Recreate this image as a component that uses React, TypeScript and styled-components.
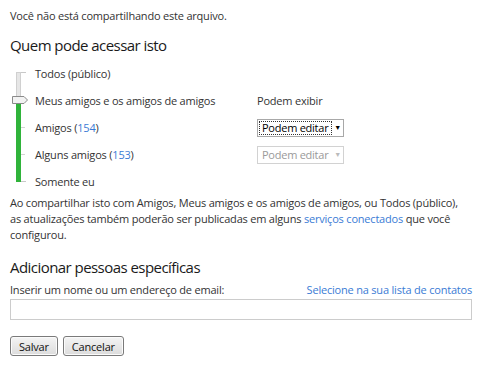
import React from 'react';
import styled, { createGlobalStyle } from 'styled-components';

const GlobalStyle = createGlobalStyle`
  body {
    margin: 0;
    background: #ffffff;
    font-family: "Open Sans", "Liberation Sans", sans-serif;
    color: #333333;
  }
`;

const Wrapper = styled.div`
  width: 480px;
  height: 367px;
  padding: 8px 8px 0 10px;
  box-sizing: border-box;
  font-size: 11px;
  letter-spacing: -0.2px;
`;

const Notice = styled.p`
  margin: 0;
  line-height: 16px;
`;

const SectionTitle = styled.h2<{ $gap: number }>`
  margin: ${(p) => p.$gap}px 0 0;
  font-size: 15px;
  font-weight: 400;
  letter-spacing: -0.55px;
  color: #1a1a1a;
  line-height: 22px;
`;

const AccessGrid = styled.div`
  display: grid;
  grid-template-columns: 25px 222px auto;
  grid-auto-rows: 27px;
  margin-top: 4px;
`;

const SliderCell = styled.div`
  grid-column: 1;
  grid-row: 1 / span 5;
`;

const OptionLabel = styled.div`
  grid-column: 2;
  display: flex;
  align-items: center;
`;

const PermissionCell = styled.div`
  grid-column: 3;
  display: flex;
  align-items: center;
`;

const Count = styled.span`
  color: #3a7bd5;
`;

const Select = styled.div<{ $disabled?: boolean }>`
  width: 87px;
  height: 18px;
  box-sizing: border-box;
  display: flex;
  align-items: stretch;
  border: 1px solid ${(p) => (p.$disabled ? '#d2d2d2' : '#a8a8a8')};
  color: ${(p) => (p.$disabled ? '#9a9a9a' : '#000000')};
  font-size: 11px;
  letter-spacing: -0.25px;
  background: #ffffff;
`;

const SelectValue = styled.div<{ $focused?: boolean }>`
  flex: 1;
  display: flex;
  align-items: center;
  padding-left: 2px;
  margin: 1px 0 1px 1px;
  border: 1px dotted ${(p) => (p.$focused ? '#333333' : 'transparent')};
  white-space: nowrap;
  overflow: hidden;
`;

const SelectArrow = styled.div<{ $disabled?: boolean }>`
  width: 11px;
  display: flex;
  align-items: center;
  justify-content: center;
  color: ${(p) => (p.$disabled ? '#bbbbbb' : '#000000')};
  font-size: 7px;
`;

const Info = styled.p`
  margin: 0;
  width: 470px;
  line-height: 16px;
`;

const Link = styled.a`
  color: #3a7bd5;
  text-decoration: none;
`;

const LabelRow = styled.div`
  display: flex;
  justify-content: space-between;
  margin-top: 4px;
  line-height: 16px;
`;

const EmailInput = styled.input`
  display: block;
  width: 462px;
  height: 21px;
  box-sizing: border-box;
  margin-top: 1px;
  border: 1px solid #cccccc;
  outline: none;
`;

const ButtonRow = styled.div`
  display: flex;
  gap: 5px;
  margin-top: 16px;
`;

const Button = styled.button`
  height: 20px;
  padding: 0 8px;
  border: 1px solid #7a7a7a;
  border-radius: 3px;
  background: linear-gradient(#f4f4f4, #dcdcdc);
  font-family: inherit;
  font-size: 11px;
  letter-spacing: -0.2px;
  color: #111111;
  box-shadow: inset 0 0 0 1px #fbfbfb;
`;

function SliderGraphic() {
  return (
    <svg width="25" height="135" viewBox="0 0 25 135">
      <rect x="6.5" y="12.5" width="4" height="25" fill="#e6e6e6" stroke="#d0d0d0" strokeWidth="1" />
      <line x1="11" y1="12.5" x2="16" y2="12.5" stroke="#c8c8c8" />
      <line x1="11" y1="67.5" x2="15" y2="67.5" stroke="#d4d4d4" />
      <line x1="11" y1="94.5" x2="15" y2="94.5" stroke="#d4d4d4" />
      <rect x="6" y="42" width="5" height="80" fill="#2fb33a" />
      <line x1="11" y1="121.5" x2="16" y2="121.5" stroke="#c8c8c8" />
      <path
        d="M2.5 36.5 H14 L17.5 40 L14 43.5 H2.5 Z"
        fill="#f2f2f2"
        stroke="#8a8a8a"
        strokeWidth="1"
      />
    </svg>
  );
}

function App() {
  return (
    <>
      <GlobalStyle />
      <Wrapper>
        <Notice>Você não está compartilhando este arquivo.</Notice>
        <SectionTitle $gap={10}>Quem pode acessar isto</SectionTitle>
        <AccessGrid>
          <SliderCell>
            <SliderGraphic />
          </SliderCell>
          <OptionLabel>Todos (público)</OptionLabel>
          <PermissionCell />
          <OptionLabel>Meus amigos e os amigos de amigos</OptionLabel>
          <PermissionCell>Podem exibir</PermissionCell>
          <OptionLabel>
            Amigos (<Count>154</Count>)
          </OptionLabel>
          <PermissionCell>
            <Select>
              <SelectValue $focused>Podem editar</SelectValue>
              <SelectArrow>▼</SelectArrow>
            </Select>
          </PermissionCell>
          <OptionLabel>
            Alguns amigos (<Count>153</Count>)
          </OptionLabel>
          <PermissionCell>
            <Select $disabled>
              <SelectValue>Podem editar</SelectValue>
              <SelectArrow $disabled>▼</SelectArrow>
            </Select>
          </PermissionCell>
          <OptionLabel>Somente eu</OptionLabel>
          <PermissionCell />
        </AccessGrid>
        <Info>
          Ao compartilhar isto com Amigos, Meus amigos e os amigos de amigos, ou Todos (público),
          <br />
          as atualizações também poderão ser publicadas em alguns{' '}
          <Link href="#">serviços conectados</Link> que você
          <br />
          configurou.
        </Info>
        <SectionTitle $gap={13}>Adicionar pessoas específicas</SectionTitle>
        <LabelRow>
          <span>Inserir um nome ou um endereço de email:</span>
          <Link href="#">Selecione na sua lista de contatos</Link>
        </LabelRow>
        <EmailInput type="text" />
        <ButtonRow>
          <Button>Salvar</Button>
          <Button>Cancelar</Button>
        </ButtonRow>
      </Wrapper>
    </>
  );
}

export default App;
